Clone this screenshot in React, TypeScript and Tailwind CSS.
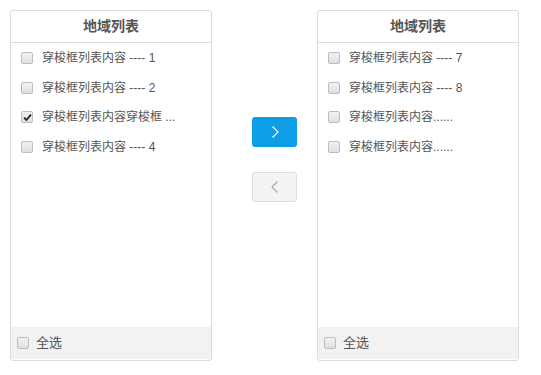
import { useState } from 'react'

type Item = { id: number; label: string }

const LEFT_ITEMS: Item[] = [
  { id: 1, label: '穿梭框列表内容 ---- 1' },
  { id: 2, label: '穿梭框列表内容 ---- 2' },
  { id: 3, label: '穿梭框列表内容穿梭框 ...' },
  { id: 4, label: '穿梭框列表内容 ---- 4' },
]

const RIGHT_ITEMS: Item[] = [
  { id: 7, label: '穿梭框列表内容 ---- 7' },
  { id: 8, label: '穿梭框列表内容 ---- 8' },
  { id: 9, label: '穿梭框列表内容......' },
  { id: 10, label: '穿梭框列表内容......' },
]

function Check({ checked }: { checked: boolean }) {
  return (
    <span className="w-[12px] h-[12px] rounded-[2px] border border-[#bdbdbd] bg-gradient-to-b from-[#f2f2f2] to-[#e0e0e0] flex items-center justify-center flex-shrink-0">
      {checked && (
        <svg width="9" height="9" viewBox="0 0 9 9">
          <path d="M1 4.6 L3.4 7 L8 1.6" fill="none" stroke="#222" strokeWidth="1.8" />
        </svg>
      )}
    </span>
  )
}

function TransferPanel({ items, selected, onToggle }: { items: Item[]; selected: Set<number>; onToggle: (id: number) => void }) {
  return (
    <div className="w-[202px] h-[351px] border border-[#dcdcdc] rounded-[3px] flex flex-col bg-white">
      <div className="h-[32px] border-b border-[#dcdcdc] flex items-center justify-center text-[14px] font-bold text-[#555]">
        地域列表
      </div>
      <div className="flex-1 flex flex-col">
        {items.map(item => (
          <div
            key={item.id}
            onClick={() => onToggle(item.id)}
            className="h-[29.7px] flex items-center gap-[9px] pl-[10px] text-[12px] text-[#555] cursor-pointer"
          >
            <Check checked={selected.has(item.id)} />
            <span>{item.label}</span>
          </div>
        ))}
      </div>
      <div className="h-[32px] mb-[1px] bg-[#f2f2f2] flex items-center gap-[7px] pl-[6px] text-[13px] text-[#555]">
        <Check checked={false} />
        <span>全选</span>
      </div>
    </div>
  )
}

export default function App() {
  const [leftSel, setLeftSel] = useState<Set<number>>(new Set([3]))
  const [rightSel, setRightSel] = useState<Set<number>>(new Set())

  const toggle = (set: Set<number>, setter: (s: Set<number>) => void) => (id: number) => {
    const next = new Set(set)
    if (next.has(id)) next.delete(id)
    else next.add(id)
    setter(next)
  }

  return (
    <div
      className="w-[541px] h-[375px] bg-white flex items-start pt-[10px] pl-[10px]"
      style={{ fontFamily: '"Liberation Sans", "Noto Sans CJK SC", sans-serif' }}
    >
      <TransferPanel items={LEFT_ITEMS} selected={leftSel} onToggle={toggle(leftSel, setLeftSel)} />
      <div className="flex flex-col gap-[25px] pt-[107px] pl-[40px] pr-[20px]">
        <button className="w-[45px] h-[30px] rounded-[3px] bg-[#0d9ee6] flex items-center justify-center">
          <svg width="10" height="14" viewBox="0 0 10 14">
            <path d="M2.5 1.5 L8 7 L2.5 12.5" fill="none" stroke="#fff" strokeWidth="1.2" />
          </svg>
        </button>
        <button className="w-[45px] h-[30px] rounded-[3px] bg-[#f3f3f3] border border-[#dcdcdc] flex items-center justify-center">
          <svg width="10" height="14" viewBox="0 0 10 14">
            <path d="M7.5 1.5 L2 7 L7.5 12.5" fill="none" stroke="#aaa" strokeWidth="1.2" />
          </svg>
        </button>
      </div>
      <TransferPanel items={RIGHT_ITEMS} selected={rightSel} onToggle={toggle(rightSel, setRightSel)} />
    </div>
  )
}
